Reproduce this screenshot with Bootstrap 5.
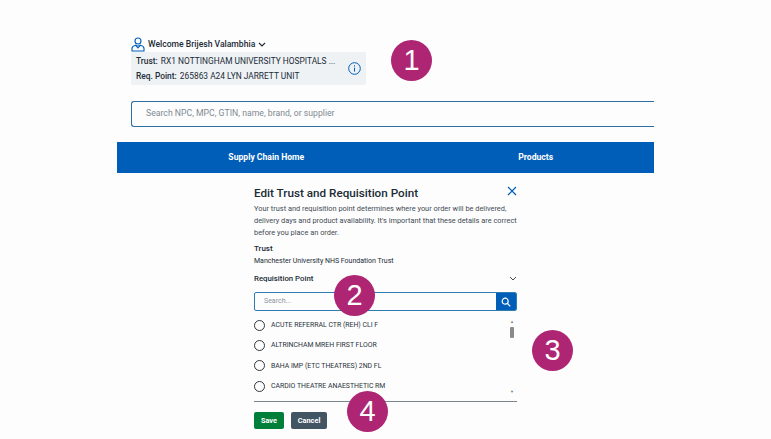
<!DOCTYPE html>
<html lang="en">
<head>
    <meta charset="UTF-8">
    <title>Edit Trust and Requisition Point</title>
    <link href="https://cdn.jsdelivr.net/npm/bootstrap@5.3.3/dist/css/bootstrap.min.css" rel="stylesheet">
    <style>
        html, body { height: 100%; }
        body {
            background: #fdfdfd;
            font-family: Roboto, "Noto Sans", sans-serif;
            color: #212b36;
            overflow: hidden;
        }
        .page-wrap {
            position: relative;
            width: 771px;
            height: 439px;
            padding: 37px 117px 0;
        }
        .top-part { padding-left: 14px; }
        .welcome-row {
            height: 15px;
            font-size: 8.6px;
            font-weight: 500;
            gap: 3px;
        }
        .trust-box {
            width: 235px;
            height: 33px;
            background: #eef2f5;
            border-radius: 2px;
            padding: 0 5px 0 5px;
            font-size: 8.4px;
            line-height: 15px;
        }
        .trust-box b { font-weight: 500; margin-right: 1px; }
        .main-search {
            height: 26px;
            margin-top: 16px;
            padding-left: 14px;
            border: 1px solid #2f6f9f;
            border-right: 0;
            border-radius: 3px 0 0 3px;
            font-size: 8.7px;
            color: #7f8a93;
        }
        .blue-nav {
            height: 31px;
            margin-top: 15px;
            background: #005eb8;
            color: #fff;
            font-size: 8.6px;
            font-weight: 700;
        }
        .blue-nav > div { width: 50%; text-align: center; }
        .blue-nav > div:first-child { padding-left: 30px; }
        .blue-nav > div:last-child { padding-left: 32px; }
        .edit-panel {
            width: 263px;
            margin: 13px 0 0 137px;
        }
        .panel-title {
            height: 14px;
            font-size: 11.7px;
            font-weight: 500;
            line-height: 14px;
        }
        .panel-text {
            font-size: 7.4px;
            line-height: 12px;
            color: #3f4a54;
            margin: 3px 0 4px;
        }
        .small-head { font-size: 8px; font-weight: 500; line-height: 12px; }
        .small-value { font-size: 7px; line-height: 12px; margin-top: 0; }
        .req-head { margin-top: 6px; height: 12px; }
        .req-head span { font-size: 7.8px; font-weight: 500; line-height: 12px; }
        .panel-search {
            height: 19px;
            margin-top: 7px;
            border: 1px solid #2f7cb0;
            border-radius: 2px;
            overflow: hidden;
        }
        .panel-search div:first-child {
            padding-left: 9px;
            font-size: 7px;
            color: #8a949c;
        }
        .search-btn { width: 20px; background: #005eb8; }
        .rp-list { height: 83px; margin-top: 4px; }
        .rp-row {
            height: 20.4px;
            gap: 6px;
            font-size: 6.9px;
            color: #2a333b;
        }
        .radio-ring {
            width: 11px;
            height: 11px;
            border: 1.3px solid #30363b;
            border-radius: 50%;
        }
        .scroll-col { width: 6px; margin-right: 2px; padding: 4px 0 3px; font-size: 4px; color: #777; }
        .scroll-thumb { width: 4px; height: 11px; background: #8a8a8a; border-radius: 1px; margin-top: 2px; }
        .panel-line { height: 1px; background: #7d858c; margin-top: 3px; }
        .btn-line { margin-top: 10px; gap: 7px; }
        .save-btn, .cancel-btn {
            height: 17px;
            padding: 0;
            border: 0;
            border-radius: 2px;
            color: #fff;
            font-size: 7.4px;
            font-weight: 700;
            line-height: 17px;
        }
        .save-btn { width: 30px; background: #007f3b; }
        .cancel-btn { width: 36px; background: #425563; }
        .step-dot {
            position: absolute;
            width: 41px;
            height: 41px;
            border-radius: 50%;
            background: #ae2573;
            color: #fff;
            font-family: "Liberation Sans", Arial, sans-serif;
            font-size: 29px;
            line-height: 41px;
            text-align: center;
        }
        .step-one { left: 391px; top: 40px; }
        .step-two { left: 334px; top: 275px; }
        .step-three { left: 532px; top: 330px; }
        .step-four { left: 347px; top: 391px; }
    </style>
</head>
<body>
    <div class="page-wrap">
        <div class="top-part">
            <div class="welcome-row d-flex align-items-center">
                <svg width="14" height="15" viewBox="0 0 14 15" fill="none" stroke="#005eb8" stroke-width="1.1">
                    <circle cx="7" cy="4" r="3"/>
                    <path d="M1 14v-2.5C1 9.5 3 8.6 4.5 8.2 5.5 9.2 8.5 9.2 9.5 8.2 11 8.6 13 9.5 13 11.5V14Z"/>
                    <path d="M4.5 8.2 7 11l2.5-2.8"/>
                </svg>
                <span>Welcome Brijesh Valambhia</span>
                <svg width="8" height="6" viewBox="0 0 8 6" fill="none" stroke="#212b36" stroke-width="1.2"><path d="M1 1l3 3 3-3"/></svg>
            </div>
            <div class="trust-box d-flex align-items-center justify-content-between">
                <div>
                    <div><b>Trust:</b> RX1 NOTTINGHAM UNIVERSITY HOSPITALS ...</div>
                    <div><b>Req. Point:</b> 265863 A24 LYN JARRETT UNIT</div>
                </div>
                <svg width="13" height="13" viewBox="0 0 13 13" fill="none" stroke="#005eb8" stroke-width="1">
                    <circle cx="6.5" cy="6.5" r="5.8"/>
                    <path d="M6.5 5.6v4M6.5 3.2v1.3"/>
                </svg>
            </div>
            <div class="main-search d-flex align-items-center">Search NPC, MPC, GTIN, name, brand, or supplier</div>
        </div>
        <div class="blue-nav d-flex align-items-center">
            <div>Supply Chain Home</div>
            <div>Products</div>
        </div>
        <div class="edit-panel">
            <div class="panel-title d-flex justify-content-between">
                <span>Edit Trust and Requisition Point</span>
                <svg width="10" height="10" viewBox="0 0 10 10" fill="none" stroke="#005eb8" stroke-width="1.2"><path d="M1 1l8 8M9 1l-8 8"/></svg>
            </div>
            <div class="panel-text">Your trust and requisition point determines where your order will be delivered, delivery days and product availability. It's important that these details are correct before you place an order.</div>
            <div class="small-head">Trust</div>
            <div class="small-value">Manchester University NHS Foundation Trust</div>
            <div class="req-head d-flex justify-content-between align-items-center">
                <span>Requisition Point</span>
                <svg width="8" height="6" viewBox="0 0 8 6" fill="none" stroke="#333" stroke-width="0.9"><path d="M1 1l3 3 3-3"/></svg>
            </div>
            <div class="panel-search d-flex">
                <div class="flex-grow-1 d-flex align-items-center">Search...</div>
                <div class="search-btn d-flex align-items-center justify-content-center">
                    <svg width="10" height="10" viewBox="0 0 10 10" fill="none" stroke="#fff" stroke-width="1.2"><circle cx="4.2" cy="4.2" r="3"/><path d="M6.5 6.5 9.3 9.3"/></svg>
                </div>
            </div>
            <div class="rp-list d-flex justify-content-between">
                <div>
                    <div class="rp-row d-flex align-items-center"><span class="radio-ring"></span>ACUTE REFERRAL CTR (REH) CLI F</div>
                    <div class="rp-row d-flex align-items-center"><span class="radio-ring"></span>ALTRINCHAM MREH FIRST FLOOR</div>
                    <div class="rp-row d-flex align-items-center"><span class="radio-ring"></span>BAHA IMP (ETC THEATRES) 2ND FL</div>
                    <div class="rp-row d-flex align-items-center"><span class="radio-ring"></span>CARDIO THEATRE ANAESTHETIC RM</div>
                </div>
                <div class="scroll-col d-flex flex-column align-items-center justify-content-between">
                    <div class="d-flex flex-column align-items-center">
                        <span>&#9650;</span>
                        <div class="scroll-thumb"></div>
                    </div>
                    <span>&#9660;</span>
                </div>
            </div>
            <div class="panel-line"></div>
            <div class="btn-line d-flex">
                <button class="btn save-btn" type="button">Save</button>
                <button class="btn cancel-btn" type="button">Cancel</button>
            </div>
        </div>
        <div class="step-dot step-one">1</div>
        <div class="step-dot step-two">2</div>
        <div class="step-dot step-three">3</div>
        <div class="step-dot step-four">4</div>
    </div>
    <script src="https://cdn.jsdelivr.net/npm/bootstrap@5.3.3/dist/js/bootstrap.bundle.min.js"></script>
</body>
</html>
